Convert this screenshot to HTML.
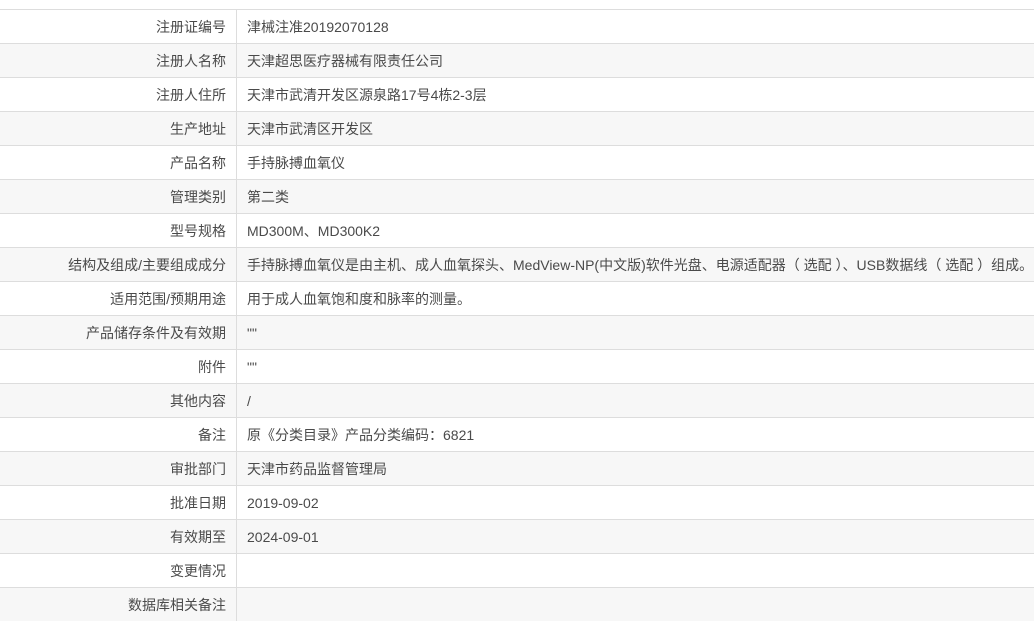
<!DOCTYPE html><html><head><meta charset="utf-8"><style>
body{margin:0;background:#fff;font-family:"Liberation Sans","Noto Sans CJK SC",sans-serif;font-size:14px;color:#4a4a4a}
table{position:absolute;top:9px;left:0;width:1034px;border-collapse:collapse}
td{height:33px;border-top:1px solid #ddd;padding:0;white-space:nowrap}
tr:nth-child(even) td{background:#f7f7f7}
td.l{width:226px;text-align:right;padding-right:10px;border-right:1px solid #ddd}
td.v{padding-left:10px}
</style></head><body><table>
<tr><td class="l">注册证编号</td><td class="v">津械注准20192070128</td></tr>
<tr><td class="l">注册人名称</td><td class="v">天津超思医疗器械有限责任公司</td></tr>
<tr><td class="l">注册人住所</td><td class="v">天津市武清开发区源泉路17号4栋2-3层</td></tr>
<tr><td class="l">生产地址</td><td class="v">天津市武清区开发区</td></tr>
<tr><td class="l">产品名称</td><td class="v">手持脉搏血氧仪</td></tr>
<tr><td class="l">管理类别</td><td class="v">第二类</td></tr>
<tr><td class="l">型号规格</td><td class="v">MD300M、MD300K2</td></tr>
<tr><td class="l">结构及组成/主要组成成分</td><td class="v">手持脉搏血氧仪是由主机、成人血氧探头、MedView-NP(中文版)软件光盘、电源适配器（ 选配 ）、USB数据线（ 选配 ）组成。</td></tr>
<tr><td class="l">适用范围/预期用途</td><td class="v">用于成人血氧饱和度和脉率的测量。</td></tr>
<tr><td class="l">产品储存条件及有效期</td><td class="v">""</td></tr>
<tr><td class="l">附件</td><td class="v">""</td></tr>
<tr><td class="l">其他内容</td><td class="v">/</td></tr>
<tr><td class="l">备注</td><td class="v">原《分类目录》产品分类编码：6821</td></tr>
<tr><td class="l">审批部门</td><td class="v">天津市药品监督管理局</td></tr>
<tr><td class="l">批准日期</td><td class="v">2019-09-02</td></tr>
<tr><td class="l">有效期至</td><td class="v">2024-09-01</td></tr>
<tr><td class="l">变更情况</td><td class="v"></td></tr>
<tr><td class="l">数据库相关备注</td><td class="v"></td></tr>
</table></body></html>
